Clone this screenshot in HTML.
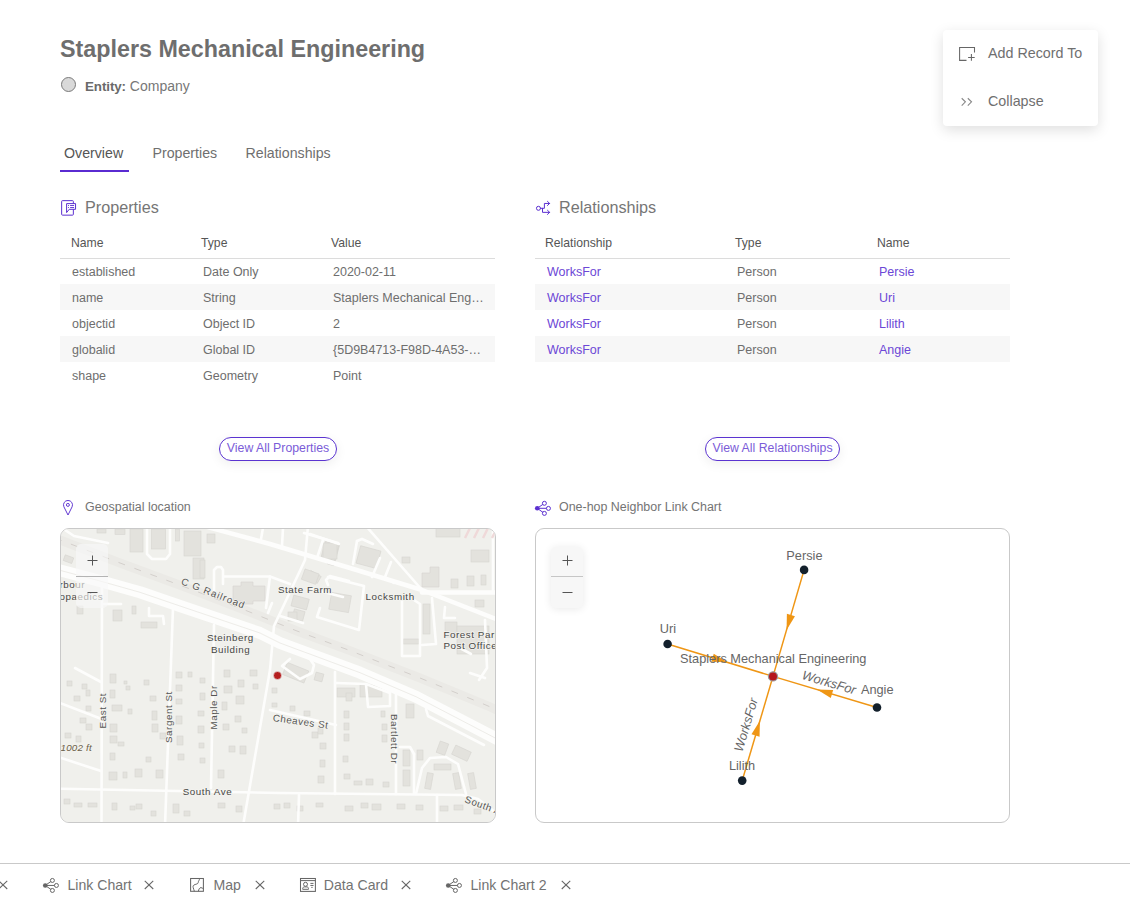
<!DOCTYPE html>
<html><head><meta charset="utf-8">
<style>
*{box-sizing:border-box;margin:0;padding:0}
html,body{width:1130px;height:903px;overflow:hidden;background:#fff}
body{position:relative;font-family:"Liberation Sans",sans-serif;color:#6a6a6a}
.a{position:absolute;white-space:nowrap;line-height:1}
.title{left:60px;top:38px;font-size:23.3px;font-weight:bold;color:#6e6e6e}
.dot{left:61px;top:77px;width:15px;height:15px;border-radius:50%;background:#d9d9d9;border:1px solid #7a7a7a}
.ent{left:85px;top:78.5px;font-size:14px;color:#777}
.ent b{color:#6a6a6a;font-size:13.4px;letter-spacing:-.1px}
.tab{top:146.4px;font-size:14.2px;color:#6f6f6f}
.uline{left:60px;top:170px;width:69px;height:2px;background:#5a2bd1}
.menu{left:943px;top:30px;width:155px;height:96px;background:#fff;border-radius:4px;box-shadow:0 4px 14px rgba(0,0,0,.13)}
.mtxt{font-size:14.3px;color:#6f6f6f}
.sech{font-size:16.2px;color:#767676}
.th{top:237px;font-size:12.2px;color:#555}
.hl{top:258px;height:1px;background:#dcdcdc}
.stripe{height:26px;background:#f7f7f7}
.td{font-size:12.5px;color:#6e6e6e}
.lk{color:#6c47d6}
.btn{height:24px;border:1.3px solid #5b34d0;border-radius:12px;font-size:12.3px;color:#7b5cd8;line-height:21px;text-align:center;box-shadow:0 3px 12px rgba(0,0,0,.065)}
.subh{font-size:12.45px;color:#747474}
.box{top:528px;height:295px;border:1px solid #c9c9c9;border-radius:9px;overflow:hidden}
.btab{top:877.6px;font-size:14.1px;color:#737373}
</style></head><body>

<div class="a title">Staplers Mechanical Engineering</div>
<div class="a dot"></div>
<div class="a ent"><b>Entity:</b> Company</div>

<div class="a tab" style="left:64px;color:#555">Overview</div>
<div class="a tab" style="left:152.5px">Properties</div>
<div class="a tab" style="left:245.5px">Relationships</div>
<div class="a uline"></div>

<div class="a menu"></div>
<svg class="a" style="left:954px;top:42px" width="26" height="24" viewBox="0 0 26 24"><path d="M12.5 18.35H5.6V5.45h14.9v5.15" fill="none" stroke="#666" stroke-width="1.05"/><path d="M17.4 12.1v6.65M14.1 15.4h6.6" stroke="#666" stroke-width="1.05"/></svg>
<div class="a mtxt" style="left:988px;top:46.3px">Add Record To</div>
<svg class="a" style="left:954px;top:90px" width="26" height="24" viewBox="0 0 26 24"><path d="M7.7 8.25l3.7 3.55-3.7 3.75M13.8 8.25l3.7 3.55-3.7 3.75" fill="none" stroke="#888" stroke-width="1.1"/></svg>
<div class="a mtxt" style="left:988px;top:94.3px">Collapse</div>

<!-- Properties section -->
<svg class="a" style="left:58px;top:197px" width="22" height="22" viewBox="0 0 22 22"><rect x="3.65" y="3.65" width="11.7" height="14.5" rx=".8" fill="none" stroke="#5b2fd0" stroke-width="1"/><path d="M11.2 12.3H17.55V6.6H8.6V15.6z" fill="#fff" stroke="#5b2fd0" stroke-width="1" stroke-linejoin="round"/><circle cx="10.5" cy="8.5" r=".55" fill="#5b2fd0"/><circle cx="10.5" cy="10.5" r=".55" fill="#5b2fd0"/><path d="M12.5 8.5h3.2M12.5 10.5h3.2" stroke="#5b2fd0" stroke-width=".9" stroke-linecap="round"/></svg>
<div class="a sech" style="left:85px;top:199px">Properties</div>
<div class="a th" style="left:71px">Name</div>
<div class="a th" style="left:201px">Type</div>
<div class="a th" style="left:331px">Value</div>
<div class="a hl" style="left:60px;width:435px"></div>
<div class="a stripe" style="left:60px;top:284px;width:435px"></div>
<div class="a stripe" style="left:60px;top:336px;width:435px"></div>
<div class="a td" style="left:72px;top:266px">established</div>
<div class="a td" style="left:203px;top:266px">Date Only</div>
<div class="a td" style="left:333px;top:266px">2020-02-11</div>
<div class="a td" style="left:72px;top:292px">name</div>
<div class="a td" style="left:203px;top:292px">String</div>
<div class="a td" style="left:333px;top:292px">Staplers Mechanical Eng…</div>
<div class="a td" style="left:72px;top:318px">objectid</div>
<div class="a td" style="left:203px;top:318px">Object ID</div>
<div class="a td" style="left:333px;top:318px">2</div>
<div class="a td" style="left:72px;top:344px">globalid</div>
<div class="a td" style="left:203px;top:344px">Global ID</div>
<div class="a td" style="left:333px;top:344px">{5D9B4713-F98D-4A53-…</div>
<div class="a td" style="left:72px;top:370px">shape</div>
<div class="a td" style="left:203px;top:370px">Geometry</div>
<div class="a td" style="left:333px;top:370px">Point</div>
<div class="a btn" style="left:219px;top:437px;width:118px">View All Properties</div>

<!-- Relationships section -->
<svg class="a" style="left:532px;top:197px" width="22" height="22" viewBox="0 0 22 22"><circle cx="6.45" cy="11.3" r="2" fill="none" stroke="#5b2fd0" stroke-width="1"/><path d="M8.45 11.3h3.95V6.45h5.3M10.5 11.3v4.05h7.2M15.5 4.4l2.1 2.05-2.1 2.05M15.5 13.3l2.1 2.05-2.1 2.05" fill="none" stroke="#5b2fd0" stroke-width="1" stroke-linecap="round" stroke-linejoin="round"/></svg>
<div class="a sech" style="left:559px;top:199px">Relationships</div>
<div class="a th" style="left:545px">Relationship</div>
<div class="a th" style="left:735px">Type</div>
<div class="a th" style="left:877px">Name</div>
<div class="a hl" style="left:535px;width:475px"></div>
<div class="a stripe" style="left:535px;top:284px;width:475px"></div>
<div class="a stripe" style="left:535px;top:336px;width:475px"></div>
<div class="a td lk" style="left:547px;top:266px">WorksFor</div>
<div class="a td" style="left:737px;top:266px">Person</div>
<div class="a td lk" style="left:879px;top:266px">Persie</div>
<div class="a td lk" style="left:547px;top:292px">WorksFor</div>
<div class="a td" style="left:737px;top:292px">Person</div>
<div class="a td lk" style="left:879px;top:292px">Uri</div>
<div class="a td lk" style="left:547px;top:318px">WorksFor</div>
<div class="a td" style="left:737px;top:318px">Person</div>
<div class="a td lk" style="left:879px;top:318px">Lilith</div>
<div class="a td lk" style="left:547px;top:344px">WorksFor</div>
<div class="a td" style="left:737px;top:344px">Person</div>
<div class="a td lk" style="left:879px;top:344px">Angie</div>
<div class="a btn" style="left:705px;top:437px;width:135px">View All Relationships</div>

<!-- Geospatial -->
<svg class="a" style="left:58px;top:496px" width="22" height="22" viewBox="0 0 22 22"><path d="M10 19L5.9 10.8A4.5 4.5 0 1 1 14.1 10.8Z" fill="none" stroke="#5b2fd0" stroke-width=".95" stroke-linejoin="round"/><circle cx="9.9" cy="8.9" r="1.5" fill="none" stroke="#5b2fd0" stroke-width=".95"/></svg>
<div class="a subh" style="left:85px;top:500.5px">Geospatial location</div>
<div class="a box" style="left:60px;width:436px;background:#f0f0ec"><svg width="436" height="295" viewBox="0 0 436 295" style="position:absolute;left:-1px;top:-1px">
<rect width="436" height="295" fill="#f0f0ec"/>
<!-- railroad band -->
<polyline points="-5,10 60,35 131,61.3 184,81.7 237,103 290,122.6 360,150 427,177.5 441,184" fill="none" stroke="#ebeae6" stroke-width="9"/>
<polyline points="-5,10 60,35 131,61.3 184,81.7 237,103 290,122.6 360,150 427,177.5 441,184" fill="none" stroke="#d3cfcb" stroke-width="1" stroke-dasharray="7,10"/>
<g fill="#e3e2dd" stroke="#d6d5d0" stroke-width=".6">
<!-- buildings upper-left -->
<rect x="70" y="1" width="13" height="23"/><rect x="91.6" y="1" width="14" height="20"/>
<rect x="124" y="3" width="17" height="25"/><rect x="133" y="30" width="11" height="21"/>
<rect x="37" y="1" width="9" height="4"/><rect x="55" y="1" width="10" height="5.5"/>
<rect x="4" y="28" width="9" height="6" transform="rotate(20 8 31)"/><rect x="115.5" y="1" width="4" height="12"/>
<rect x="53" y="82" width="9" height="11"/><rect x="72" y="78" width="4" height="8"/>
<rect x="81" y="94" width="16" height="6"/><rect x="17" y="78" width="6" height="8"/>
<!-- upper-middle -->
<path d="M173 58h8v-4h12v4h12v15h-12v3h-12v-3h-8z"/>
<rect x="250" y="43" width="8" height="12" transform="rotate(-60 254 49)"/>
<rect x="270" y="15" width="7" height="22" transform="rotate(15 273 26)"/>
<rect x="263" y="15" width="14" height="16" transform="rotate(15 270 23)"/>
<rect x="232" y="69" width="16" height="11" transform="rotate(15 240 75)"/>
<rect x="233" y="82" width="11" height="10" transform="rotate(15 238 87)"/>
<rect x="270" y="66" width="20" height="17" transform="rotate(10 280 75)"/>
<rect x="147" y="6" width="8" height="9"/><rect x="140" y="32" width="5" height="18"/>
<!-- upper-right -->
<rect x="298" y="20" width="21" height="18" transform="rotate(15 308 29)"/>
<rect x="263" y="15" width="14" height="16"/>
<rect x="342" y="29" width="8" height="6"/>
<path d="M362 45h8v-6h9v20h-17z"/>
<rect x="391" y="51" width="7" height="9"/><rect x="407" y="48" width="7" height="10"/>
<rect x="421" y="47" width="5" height="10"/><rect x="411" y="22" width="18" height="12"/>
<rect x="376" y="0" width="24" height="9"/><rect x="415" y="72" width="9" height="7"/>
<rect x="363" y="76" width="7" height="30"/><rect x="385" y="94" width="12" height="15"/>
<rect x="397" y="98" width="32" height="28"/><rect x="343" y="111" width="16" height="5"/>
<rect x="228" y="84" width="9" height="9"/><rect x="243" y="43" width="15" height="11" transform="rotate(20 250 48)"/>
<!-- around red dot -->
<rect x="224" y="138" width="23" height="13" transform="rotate(22 235 145)"/>
<rect x="255" y="145" width="8" height="8" transform="rotate(15 259 149)"/>
<rect x="277" y="160" width="18" height="9"/><rect x="300" y="157" width="22" height="12"/>
<rect x="346" y="176" width="8" height="14"/><rect x="378" y="214" width="9" height="12" transform="rotate(20 382 220)"/>
<rect x="393" y="220" width="17" height="10" transform="rotate(25 401 225)"/>
<!-- lower-left houses -->
<rect x="7" y="153" width="5" height="5"/><rect x="22" y="156" width="5" height="5"/><rect x="14" y="168" width="6" height="5"/>
<rect x="26" y="162" width="4" height="6"/><rect x="26" y="178" width="5" height="5"/><rect x="20" y="190" width="6" height="5"/>
<rect x="5" y="205" width="6" height="5"/><rect x="16" y="208" width="5" height="6"/><rect x="26" y="196" width="6" height="6"/>
<rect x="50" y="146" width="6" height="9"/><rect x="50" y="162" width="5" height="8"/><rect x="52" y="177" width="10" height="6"/>
<rect x="50" y="196" width="7" height="8"/><rect x="50" y="208" width="7" height="7"/><rect x="58" y="214" width="6" height="4"/>
<rect x="50" y="225" width="5" height="7"/><rect x="49" y="244" width="8" height="8"/><rect x="63" y="244" width="4" height="6"/>
<rect x="68" y="181" width="4" height="5"/><rect x="66" y="158" width="4" height="4"/><rect x="64" y="153" width="3" height="3"/>
<rect x="84" y="152" width="5" height="5"/><rect x="90" y="168" width="6" height="5"/><rect x="92" y="183" width="5" height="9"/>
<rect x="92" y="196" width="6" height="8"/><rect x="86" y="229" width="5" height="5"/><rect x="75" y="241" width="7" height="8"/>
<rect x="96" y="242" width="7" height="8"/><rect x="100" y="205" width="6" height="6"/>
<rect x="116" y="144" width="6" height="6"/><rect x="116" y="157" width="6" height="6"/><rect x="116" y="171" width="6" height="5"/>
<rect x="116" y="188" width="6" height="8"/><rect x="117" y="208" width="6" height="9"/><rect x="118" y="226" width="6" height="6"/>
<rect x="128" y="144" width="4" height="5"/><rect x="140" y="150" width="5" height="5"/><rect x="140" y="165" width="5" height="7"/>
<rect x="138" y="183" width="6" height="5"/><rect x="138" y="198" width="6" height="7"/><rect x="139" y="215" width="5" height="5"/>
<rect x="140" y="230" width="5" height="5"/><rect x="164" y="142" width="6" height="7"/><rect x="164" y="158" width="8" height="7"/>
<rect x="162" y="174" width="5" height="8"/><rect x="163" y="196" width="6" height="6"/><rect x="169" y="218" width="6" height="6"/>
<rect x="158" y="242" width="6" height="8"/><rect x="178" y="152" width="6" height="7"/><rect x="176" y="168" width="8" height="8"/>
<rect x="175" y="188" width="6" height="6"/><rect x="182" y="200" width="5" height="5"/><rect x="180" y="218" width="6" height="8"/>
<rect x="190" y="142" width="7" height="6"/><rect x="193" y="156" width="5" height="5"/>
<!-- lower-right houses -->
<rect x="212" y="160" width="5" height="5"/><rect x="212" y="175" width="5" height="4"/><rect x="230" y="178" width="5" height="5"/>
<rect x="244" y="183" width="6" height="5"/><rect x="252" y="204" width="6" height="6"/><rect x="258" y="200" width="5" height="6"/>
<rect x="260" y="215" width="6" height="6"/><rect x="260" y="232" width="5" height="7"/><rect x="258" y="248" width="6" height="7"/>
<rect x="286" y="165" width="6" height="8"/><rect x="284" y="183" width="5" height="7"/><rect x="284" y="195" width="5" height="7"/>
<rect x="284" y="206" width="5" height="7"/><rect x="283" y="228" width="5" height="6"/><rect x="284" y="246" width="6" height="5"/>
<rect x="294" y="253" width="8" height="4"/><rect x="306" y="251" width="7" height="6"/><rect x="323" y="254" width="6" height="5"/>
<rect x="321" y="183" width="4" height="6"/><rect x="322" y="196" width="5" height="6"/><rect x="322" y="207" width="5" height="7"/>
<rect x="343" y="222" width="7" height="16"/><rect x="343" y="242" width="7" height="16"/><rect x="357" y="222" width="6" height="10"/>
<rect x="374" y="236" width="17" height="6"/><rect x="366" y="245" width="6" height="16" transform="rotate(10 369 253)"/>
<rect x="394" y="245" width="6" height="16" transform="rotate(-10 397 253)"/><rect x="409" y="245" width="6" height="16" transform="rotate(-10 412 253)"/>
<!-- bottom strip -->
<rect x="4" y="271" width="6" height="5"/><rect x="14" y="275" width="8" height="4"/><rect x="28" y="275" width="9" height="4"/>
<rect x="52" y="275" width="5" height="7"/><rect x="70" y="278" width="5" height="4"/><rect x="76" y="276" width="6" height="5"/>
<rect x="91" y="283" width="5" height="5"/><rect x="113" y="276" width="6" height="9"/><rect x="124" y="283" width="6" height="5"/>
<rect x="158" y="275" width="7" height="5"/><rect x="176" y="278" width="6" height="6"/><rect x="214" y="276" width="6" height="5"/>
<rect x="224" y="275" width="6" height="5"/><rect x="237" y="278" width="6" height="5"/><rect x="256" y="275" width="7" height="4"/>
<rect x="285" y="278" width="8" height="5"/><rect x="301" y="275" width="7" height="5"/><rect x="312" y="276" width="9" height="6"/>
<rect x="337" y="276" width="8" height="5"/><rect x="356" y="277" width="7" height="5"/><rect x="380" y="278" width="8" height="5"/>
<rect x="394" y="277" width="9" height="5"/><rect x="414" y="281" width="7" height="5"/>
</g>
<g fill="none" stroke="#fdfdfc" stroke-linecap="round" stroke-linejoin="round">
<!-- main road (divided) -->
<polyline points="-5,41 40,53 80,64.3 120,78 200,105 220,115 300,144.7 356,168.7 441,213" stroke-width="12"/>
<!-- upper thick road -->
<polyline points="140,-3 210,16 290,40 362,62 441,93" stroke-width="4.5"/>
<polyline points="362,64.5 441,64.5" stroke-width="4.5"/>
<!-- streets -->
<g stroke-width="2.6">
<polyline points="5,2 14,8 48,15"/>
<polyline points="87,0 87,26 92,31 106,31 110,26 110,0"/>
<polyline points="248,-2 245,32 214,98 210,142 183,298"/>
<polyline points="306,-2 362,62"/>
<polyline points="42,48 41.5,298"/>
<polyline points="113,80 105,298"/>
<polyline points="154,97 151,260"/>
<polyline points="-5,260.6 220,265 402,267 418,271 430,280 441,290"/>
<polyline points="275,144 275,266"/>
<polyline points="336,166 336,266"/>
<polyline points="239,267 238,298"/><polyline points="377,267 377,298"/>
<polyline points="-5,173 41,190.7"/><polyline points="-5,228 41,243"/><polyline points="15,140 41,154"/>
<polyline points="44,76 61,76"/><polyline points="89,80 89,88 103,88 104,96"/>
<polyline points="203,0 201,11"/><polyline points="223,0 222,18"/><polyline points="250,6 279,16"/><polyline points="263,12 257,30"/>
<polyline points="154,65 154,42 157,39 161,39 163,42 163,56"/>
<polyline points="164,48.5 210,48.5 230,56"/><polyline points="210,48.5 206,80"/><polyline points="212,75 208,85"/>
<polyline points="268,57 266,52 270,48 289,53"/><polyline points="220,88 243,95"/><polyline points="252,61 283,69"/>
<polyline points="244,5 278,15"/><polyline points="297,13 302,11 313,16"/><polyline points="297,13 293,36"/>
<polyline points="320,30 312,49"/><polyline points="331,34 325,49 334,55"/>
<polyline points="342,72 342,128 360,128 360,76 354,72"/><polyline points="372,70 376,116 362,117"/>
<polyline points="433,0 433,65"/><polyline points="385,79 384,90 395,90"/><polyline points="425,92 427,140 419,152"/>
<polyline points="410,145 425,150"/><polyline points="400,120 411,126"/>
<polyline points="340,219 350,219 354,226"/><polyline points="356,266 362,240 370,230 386,229 398,236 406,266"/>
<polyline points="366,181 368,188 424,217"/>
<polyline points="210,182 276,197"/>
<polyline points="230,131 222,138 240,151 252,145 254,137 248,128"/>
<polyline points="276,155 306,156 330,165 330,178 308,179 306,156"/><polyline points="268,49 304,58 299,102 257,89 260,80"/><polyline points="354,226 354,266"/>
</g>
<polyline points="-5,41 40,53 80,64.3 120,78 200,105 220,115 300,144.7 356,168.7 441,213" stroke="#ebeae5" stroke-width=".9"/>
</g>
<!-- pink hatch top right -->
<g stroke="#efd9d9" stroke-width="2.5"><path d="M405 10l5-10M414 10l5-10M423 10l5-10M432 10l5-10"/></g>
<!-- labels -->
<g font-family="Liberation Sans, sans-serif" font-size="9.8" fill="#474745" stroke="#f3f3ef" stroke-width="1.4" paint-order="stroke" letter-spacing=".55">
<text x="218" y="65.4">State Farm</text>
<text x="305.6" y="72.4">Locksmith</text>
<text x="383.5" y="109.6">Forest Park</text>
<text x="383.5" y="120.6">Post Office</text>
<text x="146.9" y="112.9">Steinberg</text>
<text x="151" y="124.6">Building</text>
<text x="122.7" y="266.6">South Ave</text>
<text transform="translate(120.5,56) rotate(21.5)" fill="#555553" letter-spacing=".95">C G Railroad</text>
<text transform="translate(212.4,193) rotate(8)" fill="#555553">Cheaves St</text>
<text transform="translate(46.3,200.4) rotate(-90)" fill="#555553">East St</text>
<text transform="translate(112.3,215) rotate(-90)" fill="#555553">Sargent St</text>
<text transform="translate(156.6,201.4) rotate(-90)" fill="#555553">Maple Dr</text>
<text transform="translate(331,186) rotate(90)" fill="#555553">Bartlett Dr</text>
<text transform="translate(404,274) rotate(20)" fill="#555553">South Ave</text>
<text x="-0.5" y="60.4">rbour</text>
<text x="-0.5" y="72.4">opaedics</text>
<text x="0.5" y="223" font-style="italic" fill="#6b6048" letter-spacing=".2">1002 ft</text>
</g>
<!-- red point -->
<circle cx="217.5" cy="147.5" r="4" fill="#b51e1e" stroke="#e8e8e8" stroke-width=".6"/>
</svg>
<div style="position:absolute;left:15px;top:15.2px;width:31.6px;height:63.6px;background:rgba(248,248,248,.62);border-radius:5px"></div><div style="position:absolute;left:15px;top:47px;width:31.6px;height:1px;background:#b4b4b4"></div><svg style="position:absolute;left:15px;top:15px" width="32" height="64" viewBox="0 0 32 64"><path d="M16.5 11.5v10M11.5 16.5h10M11.5 48.5h10" stroke="#555" stroke-width="1"/></svg></div>

<!-- Link chart -->
<svg class="a" style="left:532px;top:496px" width="22" height="22" viewBox="0 0 22 22"><path d="M5.24 12.3L12.4 7.3M5.24 12.3H16.45M5.24 12.3L12.4 17.4" stroke="#5b2fd0" stroke-width="1"/><circle cx="5.24" cy="12.3" r="2.3" fill="#5b2fd0"/><circle cx="12.4" cy="7.3" r="2" fill="#fff" stroke="#5b2fd0" stroke-width="1"/><circle cx="16.45" cy="12.4" r="2" fill="#fff" stroke="#5b2fd0" stroke-width="1"/><circle cx="12.4" cy="17.4" r="2" fill="#fff" stroke="#5b2fd0" stroke-width="1"/></svg>
<div class="a subh" style="left:559px;top:500.5px">One-hop Neighbor Link Chart</div>
<div class="a box" style="left:535px;width:475px;background:#fff"><svg width="475" height="295" viewBox="0 0 475 295" style="position:absolute;left:-1px;top:-1px">
<g stroke="#ef9615" stroke-width="1.5">
<line x1="238" y1="148.4" x2="269.1" y2="41.9"/>
<line x1="238" y1="148.4" x2="132.6" y2="116"/>
<line x1="238" y1="148.4" x2="342" y2="179.5"/>
<line x1="238" y1="148.4" x2="207.2" y2="252.6"/>
</g>
<g fill="#ef9615">
<path d="M0 0L-15.5 -4.2L-15.5 4.2Z" transform="translate(251.58,101.89) rotate(106.28)"/>
<path d="M0 0L-15.5 -4.2L-15.5 4.2Z" transform="translate(192.34,134.36) rotate(17.09)"/>
<path d="M0 0L-15.5 -4.2L-15.5 4.2Z" transform="translate(282.12,161.59) rotate(-163.35)"/>
<path d="M0 0L-15.5 -4.2L-15.5 4.2Z" transform="translate(224.92,192.66) rotate(-73.53)"/>
</g>
<g fill="#13202c">
<circle cx="269.1" cy="41.9" r="4.3"/>
<circle cx="132.6" cy="116" r="4.3"/>
<circle cx="342" cy="179.5" r="4.3"/>
<circle cx="207.2" cy="252.6" r="4.3"/>
</g>
<circle cx="238" cy="148.4" r="4.6" fill="#b5161b" stroke="#9a9a9a" stroke-width="1.2"/>
<g font-family="Liberation Sans, sans-serif" font-size="12.75" fill="#666" text-anchor="middle">
<text x="269.4" y="31.6">Persie</text>
<text x="133" y="105">Uri</text>
<text x="238.25" y="135">Staplers Mechanical Engineering</text>
<text x="342.2" y="165.7">Angie</text>
<text x="207" y="241.8">Lilith</text>
<text font-style="italic" transform="translate(292.8,158.6) rotate(16.6)">WorksFor</text>
<text font-style="italic" transform="translate(215.2,198.1) rotate(-73.5)">WorksFor</text>
</g>
</svg>
<div style="position:absolute;left:14.8px;top:17.6px;width:32.2px;height:61.5px;background:#f7f7f7;border-radius:5px;box-shadow:0 1px 8px rgba(0,0,0,.09)"></div><div style="position:absolute;left:14.8px;top:47px;width:32.2px;height:1px;background:#c6c6c6"></div><svg style="position:absolute;left:14px;top:17px" width="32" height="62" viewBox="0 0 32 62"><path d="M17.5 9.5v10M12.5 14.5h10M12.5 46.5h10" stroke="#555" stroke-width="1"/></svg></div>

<!-- bottom bar -->
<div class="a" style="left:0;top:863px;width:1130px;height:1px;background:#c9c9c9"></div>
<svg class="a" style="left:-1.8px;top:880px" width="10" height="10" viewBox="0 0 10 10"><path d="M.75 .9l8.5 8.1M9.25 .9l-8.5 8.1" stroke="#666" stroke-width="1.05"/></svg>
<svg class="a" style="left:40px;top:874px" width="22" height="22" viewBox="0 0 22 22"><path d="M5.24 11.45L12.4 6.45M5.24 11.45H16.45M5.24 11.45L12.4 16.45" stroke="#666" stroke-width="1"/><circle cx="5.24" cy="11.45" r="2.3" fill="#666"/><circle cx="12.4" cy="6.45" r="2" fill="#fff" stroke="#666" stroke-width="1"/><circle cx="16.45" cy="11.45" r="2" fill="#fff" stroke="#666" stroke-width="1"/><circle cx="12.4" cy="16.45" r="2" fill="#fff" stroke="#666" stroke-width="1"/></svg>
<div class="a btab" style="left:67.5px">Link Chart</div>
<svg class="a" style="left:144.2px;top:880px" width="10" height="10" viewBox="0 0 10 10"><path d="M.75 .9l8.5 8.1M9.25 .9l-8.5 8.1" stroke="#666" stroke-width="1.05"/></svg>
<svg class="a" style="left:185px;top:874px" width="22" height="22" viewBox="0 0 22 22"><rect x="5.6" y="4.5" width="12.8" height="12.8" fill="none" stroke="#666" stroke-width="1.05"/><path d="M14.6 4.5C14.4 6.5 13.2 7.2 13.2 8.6 12.8 10.2 11 10 10 10.6 8.2 11 7.8 12.2 8.2 13.6 9 15 8.6 16.2 9.4 17.3M13.4 17.3C13.6 15.4 14.6 13.6 16 13.6 17 13.7 17.3 14.5 18.4 14.5" fill="none" stroke="#666" stroke-width="1"/></svg>
<div class="a btab" style="left:213.5px">Map</div>
<svg class="a" style="left:255.3px;top:880px" width="10" height="10" viewBox="0 0 10 10"><path d="M.75 .9l8.5 8.1M9.25 .9l-8.5 8.1" stroke="#666" stroke-width="1.05"/></svg>
<svg class="a" style="left:296px;top:874px" width="24" height="22" viewBox="0 0 24 22"><rect x="4.5" y="4.5" width="14.9" height="12.9" fill="none" stroke="#666" stroke-width="1.05"/><path d="M4.5 6.6h14.9M14.4 9.4h3.1M14.4 11.45h3.1M15.3 13.4h1.3" stroke="#666" stroke-width="1"/><circle cx="9.5" cy="10.3" r="2" fill="none" stroke="#666" stroke-width="1"/><path d="M6.7 15.3v-.8c0-1 .9-1.6 1.6-1.6h2.6c.8 0 1.6.6 1.6 1.6v.8z" fill="none" stroke="#666" stroke-width="1"/></svg>
<div class="a btab" style="left:323.8px">Data Card</div>
<svg class="a" style="left:401.3px;top:880px" width="10" height="10" viewBox="0 0 10 10"><path d="M.75 .9l8.5 8.1M9.25 .9l-8.5 8.1" stroke="#666" stroke-width="1.05"/></svg>
<svg class="a" style="left:443px;top:874px" width="22" height="22" viewBox="0 0 22 22"><path d="M5.24 11.45L12.4 6.45M5.24 11.45H16.45M5.24 11.45L12.4 16.45" stroke="#666" stroke-width="1"/><circle cx="5.24" cy="11.45" r="2.3" fill="#666"/><circle cx="12.4" cy="6.45" r="2" fill="#fff" stroke="#666" stroke-width="1"/><circle cx="16.45" cy="11.45" r="2" fill="#fff" stroke="#666" stroke-width="1"/><circle cx="12.4" cy="16.45" r="2" fill="#fff" stroke="#666" stroke-width="1"/></svg>
<div class="a btab" style="left:470.5px">Link Chart 2</div>
<svg class="a" style="left:560.5px;top:880px" width="10" height="10" viewBox="0 0 10 10"><path d="M.75 .9l8.5 8.1M9.25 .9l-8.5 8.1" stroke="#666" stroke-width="1.05"/></svg>

</body></html>
